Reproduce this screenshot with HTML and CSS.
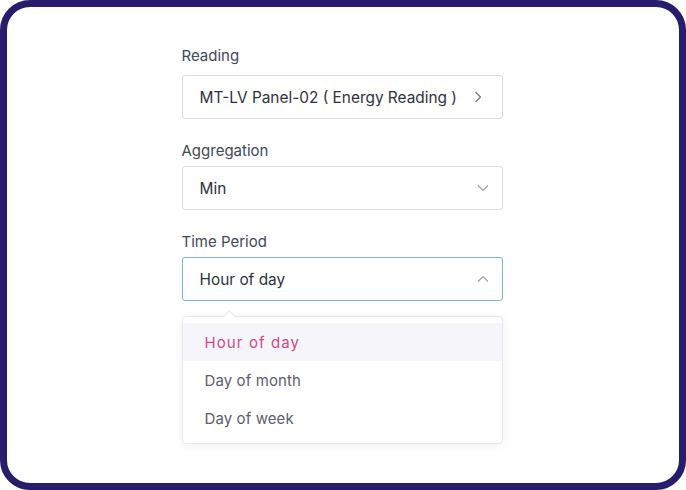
FILE: index.html
```html
<!DOCTYPE html>
<html>
<head>
<meta charset="utf-8">
<link rel="stylesheet" href="styles.css">
</head>
<body>
<div class="frame">
  <div class="form">
    <div class="field first">
      <div class="label">Reading</div>
      <div class="box nav">
        <span>MT-LV Panel-02 ( Energy Reading )</span>
        <svg class="chev" width="8" height="12" viewBox="0 0 8 12"><path d="M1.5 1 L6.5 6 L1.5 11" fill="none" stroke="#6b6f78" stroke-width="1.1"/></svg>
      </div>
    </div>
    <div class="field">
      <div class="label">Aggregation</div>
      <div class="box">
        <span>Min</span>
        <svg class="chev" width="12" height="8" viewBox="0 0 12 8"><path d="M1 1.5 L6 6.5 L11 1.5" fill="none" stroke="#9a9ea6" stroke-width="1.1"/></svg>
      </div>
    </div>
    <div class="field last">
      <div class="label">Time Period</div>
      <div class="box active">
        <span>Hour of day</span>
        <svg class="chev" width="12" height="8" viewBox="0 0 12 8"><path d="M1 6.5 L6 1.5 L11 6.5" fill="none" stroke="#9a9ea6" stroke-width="1.1"/></svg>
      </div>
    </div>
    <div class="menu">
      <div class="item selected">Hour of day</div>
      <div class="item">Day of month</div>
      <div class="item">Day of week</div>
    </div>
  </div>
</div>
</body>
</html>
```
FILE: styles.css
```css
html, body {
  margin: 0;
  padding: 0;
  background: #ffffff;
}
body {
  font-family: "Inter", "Noto Sans", sans-serif;
}
.frame {
  width: 686px;
  height: 490px;
  box-sizing: border-box;
  border: 7px solid #271d6c;
  border-radius: 30px;
  background: #ffffff;
  display: flex;
  justify-content: center;
}
.form {
  width: 321px;
  margin-right: 2px;
  padding-top: 39px;
  display: flex;
  flex-direction: column;
}
.field {
  display: flex;
  flex-direction: column;
  margin-bottom: 22px;
}
.field + .field .label {
  margin-bottom: 5px;
}
.field.last {
  margin-bottom: 15px;
}
.label {
  font-size: 15px;
  line-height: 20px;
  color: #434957;
  margin-bottom: 9px;
}
.box {
  height: 44px;
  box-sizing: border-box;
  border: 1px solid #dcdde1;
  border-radius: 3px;
  display: flex;
  align-items: center;
  justify-content: space-between;
  padding: 0 13px 0 17px;
  font-size: 15.4px;
  color: #2f333c;
}
.box.nav {
  padding-right: 20px;
}
.box.active {
  border-color: #77b9c4;
}
.menu {
  position: relative;
  border: 1px solid #e7e8ec;
  border-radius: 4px;
  box-shadow: 0 2px 10px rgba(30, 30, 60, 0.07);
  padding: 6px 0 6px;
  background: #fff;
}
.menu::before {
  content: "";
  position: absolute;
  top: -5px;
  left: 42px;
  width: 8px;
  height: 8px;
  background: #fff;
  border-left: 1px solid #e7e8ec;
  border-top: 1px solid #e7e8ec;
  transform: rotate(45deg);
}
.item {
  height: 38px;
  display: flex;
  align-items: center;
  padding-left: 22px;
  font-size: 15px;
  letter-spacing: 0.1px;
  color: #5c606a;
}
.item.selected {
  background: #f5f5fa;
  color: #cf4c85;
  letter-spacing: 1.1px;
}
```
